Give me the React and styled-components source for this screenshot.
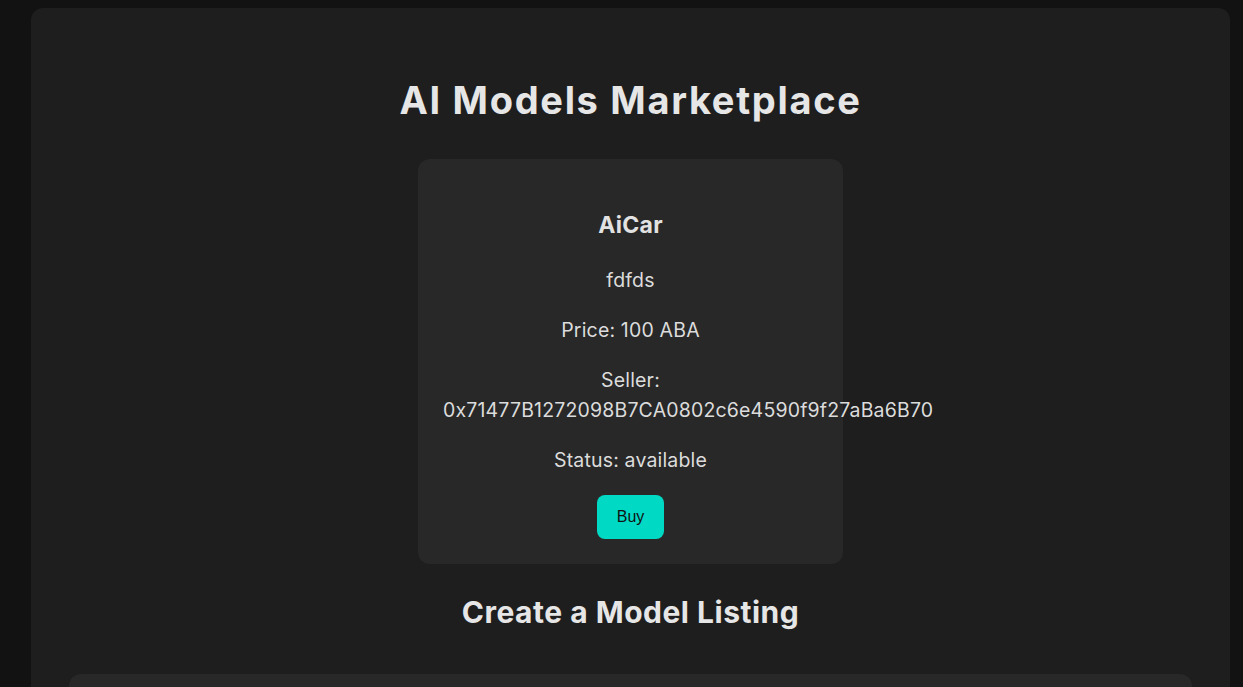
import React from "react";
import styled, { createGlobalStyle } from "styled-components";

const GlobalStyle = createGlobalStyle`
  html, body {
    margin: 0;
    padding: 0;
    background: #121212;
  }
  body {
    font-family: Inter, "Noto Sans", sans-serif;
    color: #e0e0e0;
  }
  * { box-sizing: border-box; }
`;

const Page = styled.div`
  padding: 8px 13px 0 31px;
  min-height: 100vh;
`;

const Shell = styled.main`
  background: #1e1e1e;
  border-radius: 12px;
  padding: 70px 38px 40px;
  min-height: 900px;
`;

const Title = styled.h1`
  margin: 0 0 37px;
  text-align: center;
  font-size: 38px;
  line-height: 44px;
  letter-spacing: 1.7px;
  font-weight: 700;
  color: #e6e6e6;
`;

const Grid = styled.section`
  display: flex;
  justify-content: center;
  flex-wrap: wrap;
  gap: 24px;
`;

const Card = styled.article`
  width: 425px;
  padding: 25px;
  background: #282828;
  border-radius: 12px;
  text-align: center;
`;

const CardTitle = styled.h3`
  margin: 24px 0 23px;
  font-size: 23px;
  line-height: 34px;
  letter-spacing: 0.3px;
  font-weight: 700;
  color: #e2e2e2;
`;

const Line = styled.p`
  margin: 20px 0;
  font-size: 19.5px;
  line-height: 30px;
  letter-spacing: 0.17px;
  color: #dcdcdc;
`;

const BuyButton = styled.button`
  margin: 0;
  padding: 12px 20px;
  height: 44px;
  border: none;
  border-radius: 8px;
  background: #00d9c4;
  color: #111;
  font-family: "Liberation Sans", Arial, sans-serif;
  font-size: 16px;
  line-height: 20px;
  cursor: pointer;
`;

const SectionTitle = styled.h2`
  margin: 31px 0 44px;
  text-align: center;
  font-size: 30px;
  line-height: 35px;
  letter-spacing: 0.5px;
  font-weight: 700;
  color: #e6e6e6;
`;

const FormPanel = styled.form`
  background: #282828;
  border-radius: 12px;
  padding: 25px;
  display: flex;
  flex-direction: column;
  gap: 14px;
`;

const Input = styled.input`
  padding: 10px 12px;
  border-radius: 8px;
  border: 1px solid #3a3a3a;
  background: #1e1e1e;
  color: #e0e0e0;
  font-family: inherit;
  font-size: 16px;
`;

export default function App() {
  return (
    <>
      <GlobalStyle />
      <Page>
        <Shell>
          <Title>AI Models Marketplace</Title>
          <Grid>
            <Card>
              <CardTitle>AiCar</CardTitle>
              <Line>fdfds</Line>
              <Line>Price: 100 ABA</Line>
              <Line>
                Seller: 0x71477B1272098B7CA0802c6e4590f9f27aBa6B70
              </Line>
              <Line>Status: available</Line>
              <BuyButton type="button">Buy</BuyButton>
            </Card>
          </Grid>
          <SectionTitle>Create a Model Listing</SectionTitle>
          <FormPanel onSubmit={(e) => e.preventDefault()}>
            <Input placeholder="Model name" />
            <Input placeholder="Description" />
            <Input placeholder="Price (ABA)" />
          </FormPanel>
        </Shell>
      </Page>
    </>
  );
}
